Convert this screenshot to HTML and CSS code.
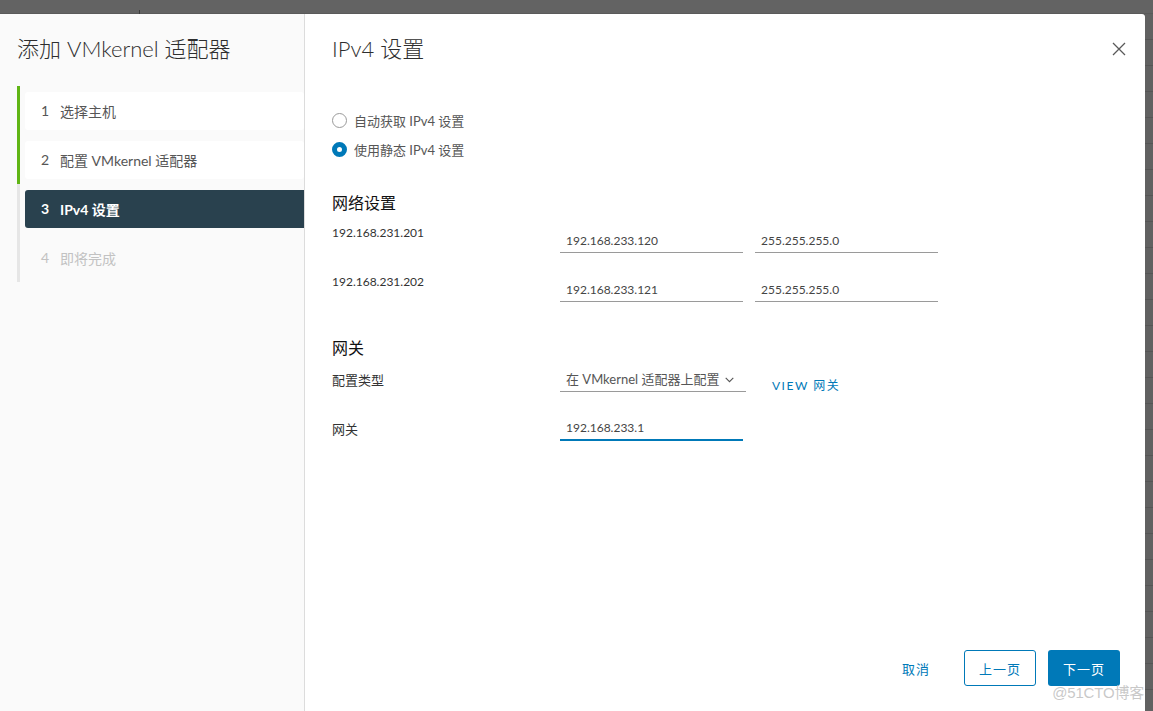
FILE: index.html
```html
<!DOCTYPE html>
<html lang="zh-CN">
<head>
<meta charset="utf-8">
<title>添加 VMkernel 适配器</title>
<link rel="stylesheet" href="styles.css">
</head>
<body>
<div class="topbar"><span class="tick"></span></div>
<div class="stage">
  <div class="modal">
    <aside class="sidebar">
      <h1 class="title">添加 VMkernel 适配器</h1>
      <ol class="steps">
        <li class="step done"><div class="step-item"><span class="num">1</span>选择主机</div></li>
        <li class="step done"><div class="step-item"><span class="num">2</span>配置 VMkernel 适配器</div></li>
        <li class="step"><div class="step-item active"><span class="num">3</span>IPv4 设置</div></li>
        <li class="step"><div class="step-item disabled"><span class="num">4</span>即将完成</div></li>
      </ol>
    </aside>
    <main class="content">
      <header class="content-header">
        <h2 class="title">IPv4 设置</h2>
        <button class="close" aria-label="关闭">
          <svg width="14" height="14" viewBox="0 0 14 14"><path d="M1 1 L13 13 M13 1 L1 13" stroke="#5a5a5a" stroke-width="1.3" fill="none"/></svg>
        </button>
      </header>

      <div class="radios">
        <label class="radio"><span class="circle"></span>自动获取 IPv4 设置</label>
        <label class="radio"><span class="circle checked"></span>使用静态 IPv4 设置</label>
      </div>

      <h3 class="section">网络设置</h3>
      <div class="net-row">
        <div class="label num-text">192.168.231.201</div>
        <div class="input num-text">192.168.233.120</div>
        <div class="input num-text">255.255.255.0</div>
      </div>
      <div class="net-row">
        <div class="label num-text">192.168.231.202</div>
        <div class="input num-text">192.168.233.121</div>
        <div class="input num-text">255.255.255.0</div>
      </div>

      <h3 class="section gw">网关</h3>
      <div class="gw-row">
        <div class="label lbl-pad">配置类型</div>
        <div class="select">在 VMkernel 适配器上配置
          <svg class="chev" width="9" height="6" viewBox="0 0 9 6"><path d="M0.7 0.8 L4.5 4.6 L8.3 0.8" stroke="#565656" stroke-width="1.1" fill="none"/></svg>
        </div>
        <a class="link">VIEW 网关</a>
      </div>
      <div class="gw-row second">
        <div class="label lbl-pad">网关</div>
        <div class="input focused num-text">192.168.233.1</div>
      </div>

      <footer class="footer">
        <button class="btn flat">取消</button>
        <button class="btn outline">上一页</button>
        <button class="btn primary">下一页</button>
      </footer>
    </main>
  </div>
  <div class="rightbg"></div>
</div>
<div class="watermark">@51CTO博客</div>
</body>
</html>
```
FILE: styles.css
```css
* { box-sizing: border-box; }
html, body { margin: 0; padding: 0; }
body {
  width: 1153px;
  height: 711px;
  overflow: hidden;
  background: #626262;
  font-family: Lato, "Noto Sans CJK SC", sans-serif;
  color: #454545;
  position: relative;
}
.topbar {
  height: 14px;
  background: #636363;
  border-bottom: 1px solid #5a5a5a;
  position: relative;
}
.tick {
  position: absolute;
  left: 139px;
  top: 10px;
  width: 1px;
  height: 4px;
  background: #3c3c3c;
}
.stage {
  display: flex;
  height: 697px;
}
.modal {
  width: 1145px;
  height: 697px;
  background: #fff;
  display: flex;
  border-top-right-radius: 3px;
  box-shadow: 1px 0 2px rgba(0,0,0,0.35);
}
.rightbg {
  flex: 1;
  background: repeating-linear-gradient(to bottom, #616161 0, #616161 25px, #555 25px, #555 26px);
}
.sidebar {
  width: 305px;
  background: #fafafa;
  border-right: 1px solid #dcdcdc;
  padding-top: 19px;
}
.title {
  margin: 0;
  font-size: 22px;
  line-height: 32px;
  font-weight: 300;
  color: #2e2e2e;
}
.sidebar .title { padding-left: 17px; }
.steps {
  list-style: none;
  margin: 21px 0 0 17px;
  padding: 0;
}
.step {
  height: 49px;
  padding: 6px 0 5px 5px;
  border-left: 3px solid #e6e6e6;
}
.step.done { border-left-color: #60b515; }
.step-item {
  height: 38px;
  background: #fff;
  border-radius: 3px;
  display: flex;
  align-items: center;
  padding-left: 16px;
  padding-bottom: 1px;
  font-size: 14px;
  color: #565656;
}
.step-item .num { width: 19px; }
.step-item.active {
  background: #29414e;
  color: #fff;
  font-weight: 700;
  border-radius: 3px 0 0 3px;
}
.step-item.disabled {
  background: transparent;
  color: #c2c2c2;
}
.content {
  flex: 1;
  display: flex;
  flex-direction: column;
  padding: 19px 25px 25px 27px;
}
.content-header {
  display: flex;
  justify-content: space-between;
  align-items: center;
}
.close {
  border: 0;
  background: none;
  padding: 0;
  margin-right: -6px;
  width: 14px;
  height: 14px;
  display: flex;
}
.radios {
  margin-top: 44px;
  display: flex;
  flex-direction: column;
  gap: 7px;
}
.radio {
  height: 22px;
  display: flex;
  align-items: center;
  font-size: 13px;
  color: #565656;
}
.circle {
  width: 15px;
  height: 15px;
  border-radius: 50%;
  border: 1px solid #9a9a9a;
  margin-right: 7px;
  background: #fff;
}
.circle.checked {
  border: 5px solid #0079b8;
  background: #fff;
}
.section {
  margin: 33px 0 11px;
  font-size: 16px;
  line-height: 20px;
  font-weight: 400;
  color: #111;
}
.section.gw { margin-top: 16px; margin-bottom: 10px; }
.net-row {
  display: flex;
  align-items: flex-start;
  height: 49px;
}
.label {
  width: 228px;
  font-size: 13px;
  line-height: 18px;
  color: #333;
}
.num-text { font-size: 12px; }
.input {
  width: 183px;
  height: 24px;
  margin-top: 5px;
  padding-left: 6px;
  line-height: 23px;
  border-bottom: 1px solid #9a9a9a;
  color: #454545;
}
.net-row .input + .input { margin-left: 12px; }
.gw-row {
  display: flex;
  align-items: flex-start;
}
.gw-row.second { margin-top: 22px; }
.lbl-pad { padding-top: 3px; }
.select {
  width: 186px;
  height: 24px;
  border-bottom: 1px solid #9a9a9a;
  font-size: 13px;
  line-height: 23px;
  padding-left: 6px;
  color: #565656;
  display: flex;
  align-items: center;
  gap: 6px;
}
.chev { margin-top: 1px; }
.link {
  margin-left: 26px;
  margin-top: 9px;
  font-size: 12px;
  line-height: 18px;
  font-weight: 400;
  letter-spacing: 1.5px;
  color: #0079b8;
}
.input.focused {
  margin-top: 0;
  height: 24px;
  line-height: 22px;
  border-bottom: 2px solid #0079b8;
}
.footer {
  margin-top: auto;
  display: flex;
  justify-content: flex-end;
  gap: 12px;
}
.btn {
  width: 72px;
  height: 36px;
  border-radius: 3px;
  font-family: Lato, "Noto Sans CJK SC", sans-serif;
  font-size: 13px;
  font-weight: 400;
  letter-spacing: 1px;
  border: 1px solid transparent;
  background: transparent;
  color: #0079b8;
  padding: 0;
}
.btn.outline { border-color: #0079b8; }
.btn.primary { background: #0079b8; color: #fff; }
.watermark {
  position: absolute;
  right: 9px;
  bottom: 9px;
  font-family: "Liberation Sans", "Noto Sans CJK SC", sans-serif;
  font-size: 15px;
  color: rgba(190,190,190,0.85);
  letter-spacing: -0.2px;
}
```
